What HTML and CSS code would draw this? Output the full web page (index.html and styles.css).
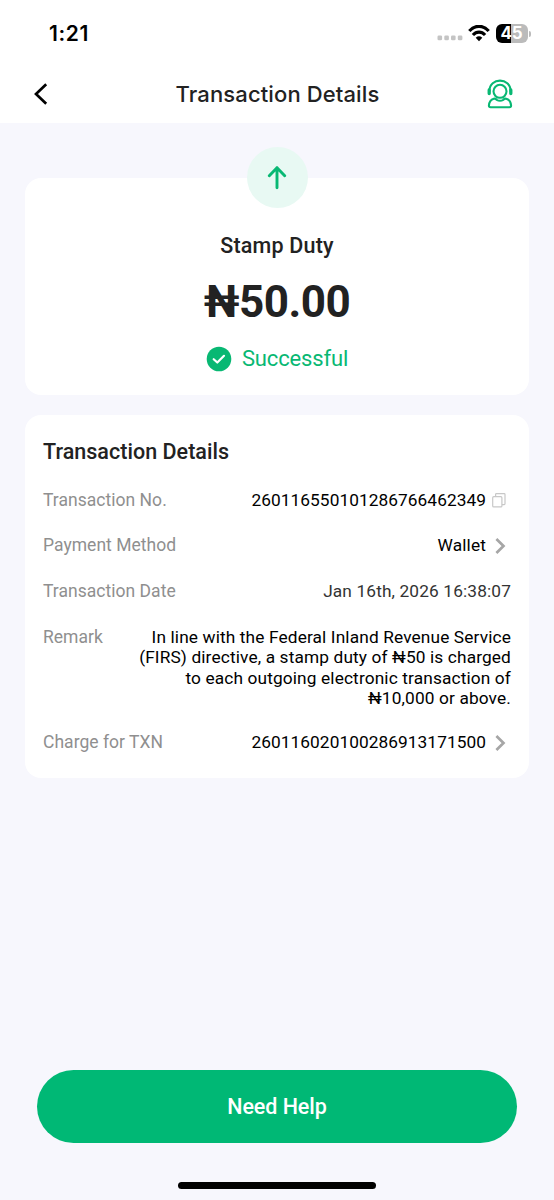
FILE: index.html
```html
<!DOCTYPE html>
<html lang="en">
<head>
<meta charset="utf-8">
<title>Transaction Details</title>
<link rel="stylesheet" href="styles.css">
</head>
<body>
<div class="screen">
  <div class="status">
    <span class="time">1:21</span>
    <div class="indicators">
      <svg class="signal" width="26" height="6" viewBox="0 0 26 6" fill="#c4c4c4"><rect x="0.5" y="0.5" width="4.6" height="4.8" rx="1.3"/><rect x="7.3" y="0.5" width="4.6" height="4.8" rx="1.3"/><rect x="14" y="0.5" width="4.6" height="4.8" rx="1.3"/><rect x="20.8" y="0.5" width="4.6" height="4.8" rx="1.3"/></svg>
      <svg class="wifi" width="22" height="17" viewBox="0 0 22 17" fill="none" stroke="#000" stroke-width="3.200"><path d="M1.300 6C7-.3 15-.3 20.700 6"/><path d="M4.900 10C8.500 6.200 13.500 6.200 17.100 10"/><path d="M7.700 12.700Q11 9.800 14.300 12.700L11 16.200Z" fill="#000" stroke="none"/></svg>
      <div class="battery"><span>45</span></div>
      <i class="nub"></i>
    </div>
  </div>
  <header class="header">
    <svg class="back" width="16" height="24" viewBox="0 0 16 24" fill="none" stroke="#000" stroke-width="2.700"><path d="M14.200 2.200L4 12L14.200 21.700"/></svg>
    <h1>Transaction Details</h1>
    <svg class="support" width="28" height="30" viewBox="0 0 28 30" fill="none" stroke="#08b873" stroke-width="2.100" stroke-linecap="round" stroke-linejoin="round"><circle cx="14" cy="12.300" r="6.500"/><path d="M3.400 12C3.400-1.800 24.600-1.800 24.600 12"/><path d="M3.200 11V14.500M24.800 11V14.500" stroke-width="3.300"/><path d="M7.800 19.700C4.500 20.600 3.100 23.800 2.900 26.600Q2.900 28.300 4.600 28.300H23.400Q25.100 28.300 25.100 26.600C24.900 23.800 23.500 20.600 20.200 19.700Q18.600 19.400 17.300 20.800Q14 22.800 10.700 20.800Q9.400 19.400 7.800 19.700Z"/></svg>
  </header>
  <main class="content">
    <section class="card summary">
      <div class="direction"><svg width="20" height="24" viewBox="0 0 20 24" fill="none" stroke="#08b873" stroke-width="2.900" stroke-linecap="round" stroke-linejoin="round"><path d="M10 21.700V1.700M2.300 9.700L10 1.700L17.700 9.700"/></svg></div>
      <div class="kind">Stamp Duty</div>
      <div class="amount">₦50.00</div>
      <div class="state">
        <svg width="26" height="26" viewBox="0 0 26 26"><circle cx="13" cy="13" r="12.300" fill="#08b873"/><path d="M7.700 13.200L11.300 16.500L18 9.800" fill="none" stroke="#fff" stroke-width="2.200" stroke-linecap="round" stroke-linejoin="round"/></svg>
        <span>Successful</span>
      </div>
    </section>
    <section class="card details">
      <h2>Transaction Details</h2>
      <div class="row"><span class="label">Transaction No.</span><span class="value num">260116550101286766462349</span><svg class="icon" width="25" height="18" viewBox="0 0 25 18" fill="none" stroke="#c8c8c8" stroke-width="1.200"><rect x="6.700" y="5.700" width="9.200" height="10.200" rx="1"/><path d="M9.600 5.500V3.500Q9.600 2.700 10.400 2.700H18.200Q19 2.700 19 3.500V12.800Q19 13.600 18.200 13.600H16"/></svg></div>
      <div class="row method"><span class="label">Payment Method</span><span class="value">Wallet</span><svg class="icon" width="25" height="18" viewBox="0 0 25 18" fill="none" stroke="#a6a6a6" stroke-width="2.700"><path d="M10.400 3L17.500 10L10.400 17"/></svg></div>
      <div class="row"><span class="label">Transaction Date</span><span class="value date">Jan 16th, 2026 16:38:07</span></div>
      <div class="row remark"><span class="label">Remark</span><span class="value">In line with the Federal Inland Revenue Service<br>(FIRS) directive, a stamp duty of ₦50 is charged<br>to each outgoing electronic transaction of<br>₦10,000 or above.</span></div>
      <div class="row"><span class="label">Charge for TXN</span><span class="value num">260116020100286913171500</span><svg class="icon" width="25" height="18" viewBox="0 0 25 18" fill="none" stroke="#a6a6a6" stroke-width="2.700"><path d="M10.400 3L17.500 10L10.400 17"/></svg></div>
    </section>
  </main>
  <footer class="footer">
    <button class="help">Need Help</button>
    <div class="home"></div>
  </footer>
</div>
</body>
</html>
```
FILE: styles.css
```css
* { box-sizing: border-box; }
body { margin: 0; font-family: Roboto, "Noto Sans", sans-serif; color: #222; }
.screen { height: 1200px; display: flex; flex-direction: column; background: #f7f7fd; }
.status { height: 65px; padding: 2px 23px 0 49px; display: flex; justify-content: space-between; align-items: center; background: #fff; font-family: Inter, sans-serif; }
.time { font-size: 21px; font-weight: 600; line-height: 24px; letter-spacing: .6px; color: #000; }
.indicators { display: flex; align-items: center; }
.signal { margin: 9px 5px 0 0; }
.wifi { margin-right: 6px; }
.battery { width: 32px; height: 19px; border-radius: 6px; background: linear-gradient(90deg, #000 47%, #bbb 47%); display: flex; align-items: center; justify-content: center; color: #fff; font-size: 17px; font-weight: 700; line-height: 19px; letter-spacing: -.3px; padding-right: 1px; }
.nub { width: 2px; height: 6px; margin-left: 1px; border-radius: 0 2px 2px 0; background: #bbb; }
.header { height: 58px; padding: 0 40px 0 32px; display: flex; align-items: center; justify-content: space-between; background: #fff; }
h1 { margin: 0 0 0 21px; font: 500 22px/30px Inter, sans-serif; letter-spacing: .12px; }
.content { flex: 1; padding: 55px 25px 0; display: flex; flex-direction: column; gap: 20px; }
.card { background: #fff; border-radius: 16px; }
.summary { height: 217px; display: flex; flex-direction: column; align-items: center; }
.direction { width: 61px; height: 61px; margin-top: -31px; border-radius: 50%; background: #e8f9f3; display: flex; align-items: center; justify-content: center; }
.kind { margin-top: 24px; font-size: 21.500px; line-height: 28px; font-weight: 500; letter-spacing: .2px; }
.amount { margin-top: 16px; font-size: 44px; line-height: 52px; font-weight: 700; letter-spacing: -.5px; }
.state { margin-top: 17px; display: flex; align-items: center; gap: 10px; color: #08b873; font-size: 22px; line-height: 28px; letter-spacing: -.15px; }
.details { height: 363px; padding: 22px 18px 0; }
h2 { margin: 0 0 22px; font-size: 21.500px; line-height: 30px; font-weight: 500; letter-spacing: .03px; }
.row { height: 22px; margin-bottom: 23.500px; display: flex; align-items: center; font-size: 17.300px; line-height: 22px; letter-spacing: .13px; }
.method { margin-top: -24.500px; margin-bottom: 24.500px; padding-top: 0; }
.row + .method { margin-top: -1px; }
.label { color: #8f8f8f; font-size: 17.500px; letter-spacing: .03px; }
.value { margin-left: auto; color: #000; text-align: right; white-space: nowrap; }
.num { letter-spacing: .06px; }
.date { color: #333; }
.remark { height: auto; align-items: flex-start; margin-bottom: 22.500px; }
.remark .value { line-height: 20.500px; padding-top: 1px; }
.footer { height: 130px; display: flex; flex-direction: column; align-items: center; justify-content: space-between; padding-bottom: 11px; }
.help { width: 480px; height: 73px; border: 0; border-radius: 37px; background: #00b875; color: #fff; font: 500 21.500px/28px Roboto, sans-serif; letter-spacing: -.05px; padding-top: 2px; }
.home { width: 198px; height: 7px; border-radius: 4px; background: #000; }
```
